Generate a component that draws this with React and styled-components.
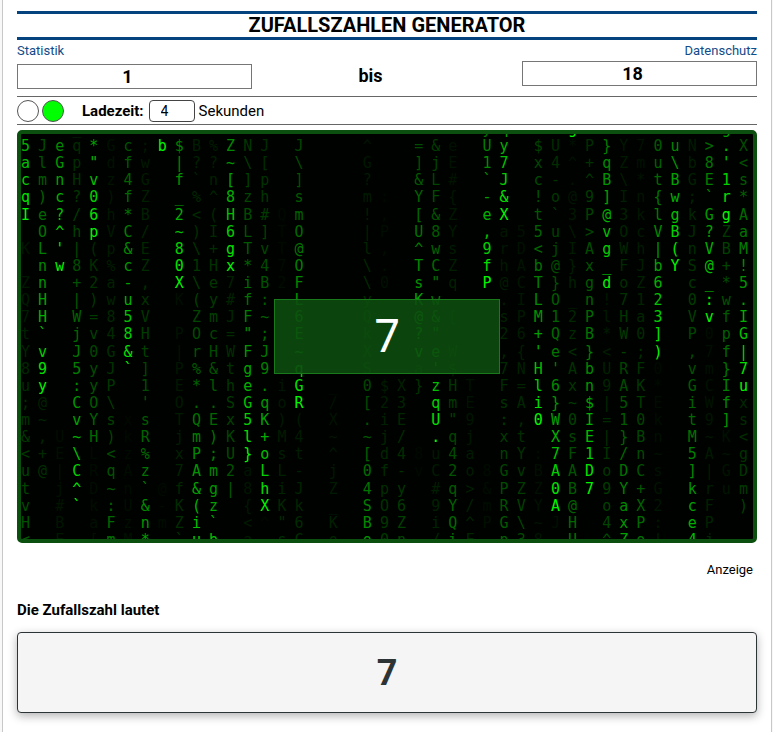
import React, { useState } from "react";
import styled, { createGlobalStyle } from "styled-components";

const GlobalStyle = createGlobalStyle`
  *, *::before, *::after { box-sizing: border-box; }
  body {
    margin: 0;
    background: #f8f8f8;
    color: #000;
    font-family: Roboto, "Liberation Sans", sans-serif;
    font-size: 15px;
  }
`;

const Page = styled.main`
  min-height: 100vh;
  margin: 0 1px 0 2px;
  padding: 11px 14px 0;
  border: solid #c8c8c8;
  border-width: 0 1px;
  background: #fff;
`;

const Title = styled.h1`
  margin: 0;
  border: solid #04437e;
  border-width: 3px 0;
  font-size: 20px;
  line-height: 23px;
  font-weight: 700;
  text-align: center;
`;

const Split = styled.div`
  display: flex;
  justify-content: space-between;
`;

const TextLink = styled.a`
  color: #104c8a;
  font-size: 13px;
  line-height: 21px;
  text-decoration: none;
`;

const RangeRow = styled.div`
  display: grid;
  grid-template-columns: 235fr 237fr 33fr 235fr;
  align-items: start;
  height: 35px;
`;

const NumberField = styled.input`
  width: 100%;
  height: 25px;
  margin: ${(p) => (p.$lowered ? "3px 0 0" : "0")};
  padding: 0 14px 0 0;
  border: 1px solid #767676;
  background: #fff;
  font: 700 18px Roboto, sans-serif;
  text-align: center;
`;

const RangeWord = styled.span`
  font-size: 18px;
  line-height: 29px;
  font-weight: 700;
  text-align: center;
`;

const Gap = styled.span``;

const Options = styled.div`
  display: flex;
  align-items: center;
  height: 29px;
  border: solid #666;
  border-width: 1px 0;
`;

const Lamp = styled.input`
  appearance: none;
  width: 22px;
  height: 22px;
  margin: 0 3px 0 0;
  border: 1px solid #555;
  border-radius: 50%;
  background: #fff;
  &:checked { background: #0f0; }
`;

const TimeLabel = styled.label`
  margin-left: 15px;
  font-weight: 700;
`;

const TimeField = styled.input`
  width: 46px;
  height: 22px;
  margin: 0 4px 0 5px;
  padding: 0 11px;
  border: 1px solid #444;
  border-radius: 4px;
  background: #fff;
  font: 400 14px Roboto, sans-serif;
`;

const Screen = styled.section`
  position: relative;
  height: 413px;
  margin-top: 5px;
  border: 4px solid #0b500f;
  border-radius: 5px;
  background: #000200;
  overflow: hidden;
`;

const Rain = styled.div`
  display: grid;
  grid-template-columns: repeat(43, minmax(0, 1fr));
  height: 428px;
  margin: -13px -3px 0 0;
  font: 15px/17px "DejaVu Sans Mono", monospace;
`;

const Stream = styled.div`
  display: grid;
  grid-template-rows: repeat(25, minmax(0, 1fr));
`;

const Glyph = styled.span`
  color: rgb(0, ${(p) => p.$level}, 0);
  white-space: pre;
`;

const ScreenNumber = styled.output`
  position: absolute;
  inset: 0;
  display: grid;
  place-items: center;
  width: 31%;
  height: 75px;
  margin: auto;
  border: 1px solid #197a1c;
  background: rgba(12, 76, 14, 0.9);
  color: #fff;
  font: 400 45px/69px "Noto Sans", sans-serif;
  align-items: start;
`;

const AdNote = styled.p`
  margin: 17px 4px 0;
  font-size: 13px;
  line-height: 20px;
  text-align: right;
`;

const ResultTitle = styled.h2`
  margin: 20px 0 12px;
  font-size: 15px;
  line-height: 20px;
  font-weight: 700;
`;

const Result = styled.output`
  display: grid;
  place-items: center;
  height: 81px;
  border: 1px solid #2d3436;
  border-radius: 4px;
  background: #f5f5f5;
  box-shadow: 0 3px 10px rgba(0, 0, 0, 0.3);
  color: #2d3436;
  font-size: 36px;
  font-weight: 700;
`;

/* Each stream: its 25 glyphs from top to bottom, then [last row, head row] runs
   that set how far every glyph has faded behind its head. */
const streams = [
  [" 5acqI K ZQ7tY8u;m&<utvH<", [5, 5], [24, 36]],
  [" Jlm)eOLnnHH`v9y@~,+@    ", [15, 15], [24, 40]],
  [" eGnc?^'w         UE|j#BE", [8, 8], [24, 52]],
  ["_qpH?/h|8+|WjJ5:Cv~\\C^`  ", [22, 22], [24, 60]],
  [" *\"v06p(K2)=v0yyOYHLRDka[", [6, 6], [18, 28], [24, 56]],
  [" Gdz)hVp%aw84GJP\\s)<q~:Fm", [24, 33]],
  ["fcf4f*C&c-u58&`  xkzAnUzM", [14, 14], [24, 56]],
  [" ;wGZB/EZ,xVHt]1'sR%z`&n*", [24, 29]],
  [" b                   @-m ", [1, 1], [24, 58]],
  [" $|f_2~80XK P|PEOTjx7fKZ`", [9, 9], [24, 43]],
  [" B?`%<)\\1\\(ZOr%*.QmPA&(iu", [24, 26]],
  [" %?n^(I+HeymcH&l.E);mgz`b", [24, 27]],
  ["CZ~[8H6gx7#J=WthSxKU2|   ", [8, 8], [24, 33]],
  [" N\\]zBLT*ifF\"FgeG5l}a8{<a", [19, 19], [24, 50]],
  [" J[ph#]v4B:~;J9.qK+oLhX^ ", [22, 22], [24, 60]],
  ["     QTT72     io)MsLiK\"s", [24, 44]],
  [" J\\]smO@OFL6E~qGR(4t-Jk6C", [16, 16], [24, 44]],
  ["                         "],
  ["               _/X~^jZ_Ko", [24, 47]],
  ["                         "],
  [" ^G?m!|l\\\\yQkXS0[.~[04SBo", [24, 30]],
  ["    :,P,.0     $2ijdfpO90", [24, 41]],
  ["               X3E/4-y6Zn", [24, 39]],
  [" =]&Y[U^TsK@?va}   8v    ", [13, 15], [15, 34], [24, 58]],
  [" &jLF&8wC\"w&\"e'zqU.uC#9i/", [18, 18], [24, 46]],
  [" eE#{ZYsZq [ W$Hm\"q42qYQi", [24, 33]],
  ["               TE9jao>/^F", [24, 46]],
  ["yU1`-e,9fP          8&mP ", [9, 9], [24, 56]],
  ["qy7J&Xarh@.s2,7Fs:xnGPRGn", [5, 5], [24, 35]],
  ["      5DACIP6{N=A,tYvZV\\3", [24, 38]],
  [" $xc!t5<bTLM+'Hli0 :BZY~8", [17, 17], [24, 53]],
  [" U4-o`uj@}O1Qe'6}WX7A0AJ ", [22, 22], [24, 56]],
  ["g*^.@3\\I}h_2z<Ax~0sFAB@HU", [0, 0], [24, 33]],
  [" P+^9P>AxgnPB}bn$IE1D7   ", [21, 21], [24, 60]],
  [" }qB]@vg_d!l*<U9|=|Io9o4^", [9, 9], [24, 38]],
  [" YZ\\I3OWFo7HW-RA51}/DYaxZ", [24, 29]],
  [" 7m*nkchJZ1a0;FKT0BnC+XPo", [24, 33]],
  [" 0ut{lV|b623])0*Ekn~sG2:!", [13, 13], [24, 51]],
  [" u\\BwgB(Y                ", [8, 8], [24, 60]],
  [" NbG;kJnSc0VP,vGitM5]kce4", [24, 27]],
  [" >8E`G?V@_:v07mCW9~A|rFPj", [11, 11], [24, 46]],
  ["g.'1rgZB+*wfpf}If]K~Gu   ", [5, 5], [17, 23], [24, 50]],
  [" X<s*AaM!5.IG|7uxs<gDm)  ", [15, 15], [24, 38]],
];

const brightness = (row, runs) => {
  const run = runs.find(([last]) => row <= last);
  return run ? Math.round(245 * 0.92 ** (run[1] - row)) : 0;
};

function DigitalRain() {
  return (
    <Rain aria-hidden="true">
      {streams.map(([glyphs, ...runs], column) => (
        <Stream key={column}>
          {[...glyphs].map((glyph, row) => (
            <Glyph key={row} $level={brightness(row, runs)}>{glyph}</Glyph>
          ))}
        </Stream>
      ))}
    </Rain>
  );
}

export default function App() {
  const [from, setFrom] = useState("1");
  const [to, setTo] = useState("18");
  const [seconds, setSeconds] = useState("4");
  const [theme, setTheme] = useState("green");

  return (
    <>
      <GlobalStyle />
      <Page>
        <Title>ZUFALLSZAHLEN GENERATOR</Title>
        <Split>
          <TextLink href="#statistik">Statistik</TextLink>
          <TextLink href="#datenschutz">Datenschutz</TextLink>
        </Split>
        <RangeRow>
          <NumberField $lowered aria-label="Von" inputMode="numeric" value={from} onChange={(e) => setFrom(e.target.value)} />
          <RangeWord>bis</RangeWord>
          <Gap />
          <NumberField aria-label="Bis" inputMode="numeric" value={to} onChange={(e) => setTo(e.target.value)} />
        </RangeRow>
        <Options>
          <Lamp type="radio" name="theme" aria-label="Weiß" checked={theme === "white"} onChange={() => setTheme("white")} />
          <Lamp type="radio" name="theme" aria-label="Grün" checked={theme === "green"} onChange={() => setTheme("green")} />
          <TimeLabel htmlFor="seconds">Ladezeit:</TimeLabel>
          <TimeField id="seconds" inputMode="numeric" value={seconds} onChange={(e) => setSeconds(e.target.value)} />
          <span>Sekunden</span>
        </Options>
        <Screen>
          <DigitalRain />
          <ScreenNumber>7</ScreenNumber>
        </Screen>
        <AdNote>Anzeige</AdNote>
        <ResultTitle id="result-title">Die Zufallszahl lautet</ResultTitle>
        <Result aria-labelledby="result-title">7</Result>
      </Page>
    </>
  );
}
